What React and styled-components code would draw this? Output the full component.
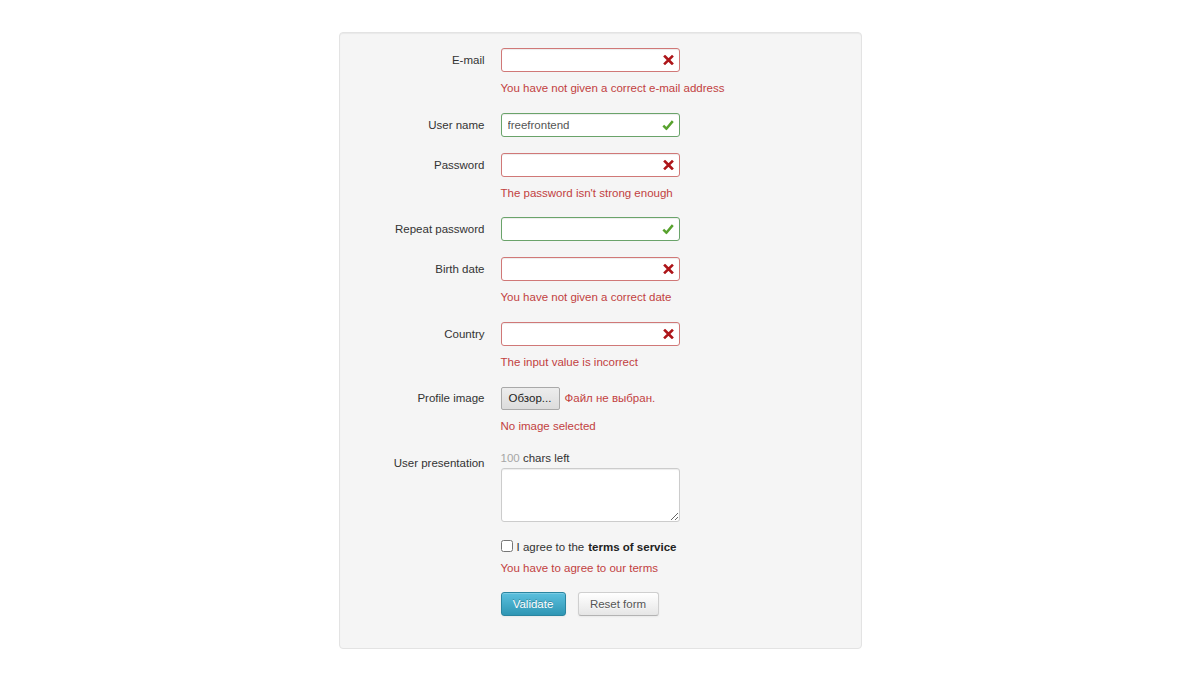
import React from 'react';
import styled, { createGlobalStyle } from 'styled-components';

const GlobalStyle = createGlobalStyle`
  html, body {
    margin: 0;
    padding: 0;
    background: #fff;
  }
  body {
    font-family: "Liberation Sans", Arial, sans-serif;
    font-size: 11.5px;
    color: #333;
  }
`;

const Page = styled.div`
  width: 1200px;
  height: 680px;
  padding-top: 32px;
  box-sizing: border-box;
`;

const Well = styled.form`
  width: 523px;
  margin: 0 auto;
  box-sizing: border-box;
  background: #f5f5f5;
  border: 1px solid #e3e3e3;
  border-radius: 4px;
  box-shadow: inset 0 1px 1px rgba(0, 0, 0, 0.05);
  padding: 15px 0 32px 0;
  display: flex;
  flex-direction: column;
  gap: 16px;
`;

const Group = styled.div`
  display: grid;
  grid-template-columns: 145px 179px;
  column-gap: 16px;
  align-items: start;
`;

const Label = styled.label`
  text-align: right;
  line-height: 24px;
  color: #333;
`;

const Controls = styled.div`
  grid-column: 2;
  display: flex;
  flex-direction: column;
`;

const InputWrap = styled.div`
  position: relative;
  width: 179px;
  height: 24px;
`;

const Input = styled.input`
  box-sizing: border-box;
  width: 100%;
  height: 100%;
  margin: 0;
  padding: 0 24px 0 6px;
  font-family: inherit;
  font-size: 11.5px;
  color: #555;
  background: #fff;
  border: 1px solid ${p => (p.$state === 'ok' ? '#6aa36a' : '#d07877')};
  border-radius: 3px;
  box-shadow: inset 0 1px 1px rgba(0, 0, 0, 0.075);
  outline: none;
`;

const StateIcon = styled.span`
  position: absolute;
  right: 6px;
  top: 50%;
  transform: translateY(-50%);
  display: flex;
  align-items: center;
`;

const Error = styled.div`
  color: #c2413f;
  line-height: 16.5px;
  margin-top: ${p => p.$gap ?? 8}px;
  white-space: nowrap;
`;

const FileRow = styled.div`
  display: flex;
  align-items: center;
  gap: 5px;
  height: 24px;
`;

const FileButton = styled.button`
  height: 23px;
  width: 59px;
  margin: 0;
  padding: 0;
  font-family: inherit;
  font-size: 11.5px;
  color: #222;
  background: linear-gradient(#ededed, #dcdcdc);
  border: 1px solid #a9a9a9;
  border-radius: 2px;
`;

const FileName = styled.span`
  color: #c2413f;
`;

const CharsLeft = styled.div`
  line-height: 15px;
  color: #333;
  span {
    color: #a6a6a6;
  }
`;

const TextArea = styled.textarea`
  box-sizing: border-box;
  width: 179px;
  height: 54px;
  margin: 2px 0 0 0;
  padding: 4px 6px;
  font-family: inherit;
  font-size: 11.5px;
  background: #fff;
  border: 1px solid #ccc;
  border-radius: 3px;
  box-shadow: inset 0 1px 1px rgba(0, 0, 0, 0.075);
  outline: none;
  display: block;
`;

const CheckRow = styled.label`
  display: flex;
  align-items: center;
  gap: 4px;
  line-height: 18px;
  white-space: nowrap;
  input {
    margin: 0 0 1px 0;
    width: 12px;
    height: 12px;
  }
  b {
    font-weight: bold;
    color: #222;
  }
`;

const Actions = styled.div`
  display: flex;
  gap: 12px;
`;

const Button = styled.button`
  height: 24px;
  width: ${p => p.$w}px;
  margin: 0;
  padding: 0;
  font-family: inherit;
  font-size: 11.5px;
  border-radius: 3px;
  ${p =>
    p.$primary
      ? `
    color: #fff;
    text-shadow: 0 -1px 0 rgba(0,0,0,0.25);
    background: linear-gradient(#5bc0de, #2f96b4);
    border: 1px solid #2a85a0;
  `
      : `
    color: #555;
    text-shadow: 0 1px 1px rgba(255,255,255,0.75);
    background: linear-gradient(#ffffff, #e6e6e6);
    border: 1px solid #cfcfcf;
    border-bottom-color: #b3b3b3;
  `}
  box-shadow: inset 0 1px 0 rgba(255, 255, 255, 0.2), 0 1px 2px rgba(0, 0, 0, 0.05);
`;

const Cross = () => (
  <svg width="11" height="11" viewBox="0 0 11 11">
    <path d="M2 2 L9 9 M9 2 L2 9" stroke="#ad1519" strokeWidth="2.6" strokeLinecap="square" />
  </svg>
);

const Check = () => (
  <svg width="12" height="11" viewBox="0 0 12 11">
    <path d="M1.3 6.2 L4.4 9.2 L10.8 1.6" stroke="#58a22e" strokeWidth="2.5" fill="none" />
  </svg>
);

const Field = ({ label, value = '', state, error }) => (
  <Group>
    <Label>{label}</Label>
    <Controls>
      <InputWrap>
        <Input $state={state} defaultValue={value} />
        <StateIcon>{state === 'ok' ? <Check /> : <Cross />}</StateIcon>
      </InputWrap>
      {error && <Error>{error}</Error>}
    </Controls>
  </Group>
);

export default function App() {
  return (
    <Page>
      <GlobalStyle />
      <Well onSubmit={e => e.preventDefault()}>
        <Field label="E-mail" state="bad" error="You have not given a correct e-mail address" />
        <Field label="User name" state="ok" value="freefrontend" />
        <Field label="Password" state="bad" error="The password isn't strong enough" />
        <Field label="Repeat password" state="ok" />
        <Field label="Birth date" state="bad" error="You have not given a correct date" />
        <Field label="Country" state="bad" error="The input value is incorrect" />

        <Group>
          <Label>Profile image</Label>
          <Controls>
            <FileRow>
              <FileButton type="button">Обзор...</FileButton>
              <FileName>Файл не выбран.</FileName>
            </FileRow>
            <Error>No image selected</Error>
          </Controls>
        </Group>

        <Group>
          <Label>User presentation</Label>
          <Controls>
            <CharsLeft>
              <span>100</span> chars left
            </CharsLeft>
            <TextArea />
          </Controls>
        </Group>

        <Group>
          <Controls>
            <CheckRow>
              <input type="checkbox" />
              I agree to the <b>terms of service</b>
            </CheckRow>
            <Error $gap={4}>You have to agree to our terms</Error>
          </Controls>
        </Group>

        <Group>
          <Controls>
            <Actions>
              <Button $primary $w={65} type="submit">Validate</Button>
              <Button $w={81} type="reset">Reset form</Button>
            </Actions>
          </Controls>
        </Group>
      </Well>
    </Page>
  );
}
